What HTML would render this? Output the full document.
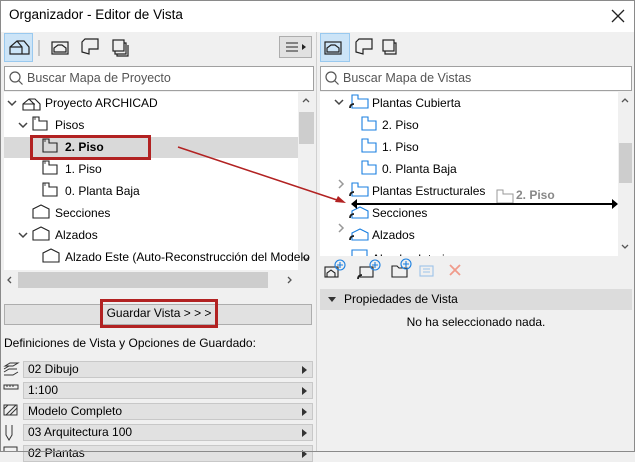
<html><head><style>
*{box-sizing:border-box}
body{margin:0;width:635px;height:452px;overflow:hidden;font-family:"Liberation Sans",sans-serif;font-size:12px;color:#000;background:#f0f0f0;position:relative}
.a{position:absolute}
.row{position:absolute;height:22px;line-height:22px;white-space:nowrap}
.srch{background:#fff;border:1px solid #a0a0a0;height:25px;line-height:23px;color:#555;padding-left:22px;font-size:12.5px}
.dd{position:absolute;left:23px;width:290px;height:17px;border:1px solid #c8c8c8;background:#e1e1e1;line-height:15px;padding-left:4px}
.dd:after{content:"";position:absolute;right:5px;top:4px;border-left:5px solid #333;border-top:4px solid transparent;border-bottom:4px solid transparent}
</style></head><body>
<div class="a" style="left:0;top:0;width:635px;height:452px;border:1px solid #8a8a8a;pointer-events:none;z-index:9"></div>
<div class="a" style="left:0;top:0;width:635px;height:32px;background:#fff"></div>
<div class="a" style="left:9px;top:7px;font-size:13.5px">Organizador - Editor de Vista</div>
<svg class="a" style="left:611px;top:9px" width="14" height="14" stroke="#222" stroke-width="1.3"><path d="M1 1l12 12M13 1L1 13"/></svg>
<div class="a" style="left:316px;top:32px;width:1px;height:420px;background:#d0d0d0"></div>

<div class="a" style="left:4px;top:33px;width:29px;height:29px;background:#cce4f7;border:1px solid #99c9ef"></div>
<svg class="a" style="left:0;top:32px" width="320" height="30" fill="none" stroke="#222" stroke-width="1.2">
<path d="M10 22V15l7-6h7l5 6v7zM17 9l5 6v7M10 15h12"/>
<line x1="39" y1="8" x2="39" y2="24" stroke="#aaa"/>
<rect x="52" y="10" width="16" height="12"/><path d="M54 20v-4l4-3h4l4 3v4z"/>
<path d="M82 20v-10l3-3h13v10h-9v5zM89 17h9"/>
<rect x="113" y="8" width="11" height="11"/><path d="M115 19v3h11v-11h-2M117 22v2h11v-11"/>
</svg>
<div class="a" style="left:279px;top:36px;width:33px;height:22px;background:#e1e1e1;border:1px solid #adadad"></div>
<svg class="a" style="left:284px;top:40px" width="28" height="14" stroke="#222"><path d="M2 3h12M2 7h12M2 11h12"/><path d="M18 4l4 3-4 3z" fill="#222" stroke="none"/></svg>

<div class="a srch" style="left:4px;top:66px;width:310px">Buscar Mapa de Proyecto</div>
<svg class="a" style="left:8px;top:70px" width="16" height="16" fill="none" stroke="#555" stroke-width="1.2"><circle cx="7" cy="7" r="5"/><path d="M10.5 10.5l4 4"/></svg>

<div class="a" style="left:4px;top:92px;width:294px;height:178px;background:#fff;overflow:hidden">
<div class="a" style="left:-4px;top:45px;width:298px;height:21px;background:#d9d9d9"></div>
</div>
<div class="a" style="left:298px;top:92px;width:16px;height:178px;background:#f0f0f0"></div>
<div class="a" style="left:299px;top:112px;width:15px;height:32px;background:#cdcdcd"></div>
<svg class="a" style="left:300px;top:96px" width="12" height="170" fill="none" stroke="#555" stroke-width="1.3"><path d="M3 6l3-3 3 3M3 161l3 3 3-3"/></svg>
<div class="a" style="left:4px;top:270px;width:310px;height:18px;background:#f0f0f0"></div>
<div class="a" style="left:18px;top:272px;width:250px;height:16px;background:#cdcdcd"></div>
<svg class="a" style="left:4px;top:272px" width="310" height="16" fill="none" stroke="#555" stroke-width="1.3"><path d="M7 5l-3 3 3 3M284 5l3 3-3 3"/></svg>

<svg class="a" style="left:0;top:92px" width="300" height="178" fill="none" stroke="#222" stroke-width="1.1">
<path d="M8 9l4 4 4-4M19 31l4 4 4-4M19 141l4 4 4-4" stroke="#444" stroke-width="1.5"/>
<path d="M23 18v-6l6-5h6l5 5v6zM29 7l5 5v6M23 12h12"/>
<path d="M33 38v-13h6v4h8v9z"/><path d="M35 25v3" stroke-width=".8"/>
<path d="M43 60v-13h6v4h8v9z"/><path d="M45 47v3" stroke-width=".8"/>
<path d="M43 82v-13h6v4h8v9z"/><path d="M45 69v3" stroke-width=".8"/>
<path d="M43 104v-13h6v4h8v9z"/><path d="M45 91v3" stroke-width=".8"/>
<path d="M33 126v-9l8-4 8 4v9z"/>
<path d="M33 148v-9l8-4 8 4v9z"/>
<path d="M43 170v-9l8-4 8 4v9z"/>
</svg>
<div class="row" style="left:45px;top:92px">Proyecto ARCHICAD</div>
<div class="row" style="left:55px;top:114px">Pisos</div>
<div class="row" style="left:65px;top:136px;font-weight:bold">2. Piso</div>
<div class="row" style="left:65px;top:158px">1. Piso</div>
<div class="row" style="left:65px;top:180px">0. Planta Baja</div>
<div class="row" style="left:55px;top:202px">Secciones</div>
<div class="row" style="left:55px;top:224px">Alzados</div>
<div class="row" style="left:65px;top:246px">Alzado Este (Auto-Reconstrucción del Modelo</div>
<div class="a" style="left:30px;top:135px;width:121px;height:25px;border:3px solid #b22222"></div>

<div class="a" style="left:4px;top:304px;width:308px;height:21px;background:#e1e1e1;border:1px solid #adadad"></div>
<div class="a" style="left:100px;top:299px;width:118px;height:29px;border:3px solid #b22222;text-align:center;line-height:23px">Guardar Vista &gt; &gt; &gt;</div>
<div class="a" style="left:4px;top:336px">Definiciones de Vista y Opciones de Guardado:</div>
<div class="dd" style="top:361px">02 Dibujo</div>
<div class="dd" style="top:382px">1:100</div>
<div class="dd" style="top:403px">Modelo Completo</div>
<div class="dd" style="top:424px">03 Arquitectura 100</div>
<div class="dd" style="top:445px">02 Plantas</div>
<svg class="a" style="left:0;top:360px" width="22" height="92" fill="none" stroke="#333" stroke-width="1">
<path d="M5 6l5-3h8l-5 3zM4 9l5-3M4 12l5-3h8M4 15h9l5-3"/>
<path d="M4 25h14v4H4zM7 25v2M10 25v2M13 25v2"/>
<rect x="4" y="45" width="13" height="10"/><path d="M4 49l4-4M6 55l10-10M10 55l7-7"/>
<path d="M6 65v10l3 5 3-5v-10"/>
<rect x="4" y="87" width="13" height="6"/>
</svg>

<div class="a" style="left:320px;top:33px;width:30px;height:29px;background:#cce4f7;border:1px solid #99c9ef"></div>
<svg class="a" style="left:317px;top:32px" width="80" height="30" fill="none" stroke="#222" stroke-width="1.2">
<rect x="8" y="10" width="16" height="12"/><path d="M10 20v-4l4-3h4l4 3v4z"/>
<path d="M39 20v-10l3-3h13v10h-9v5zM46 17h9"/>
<rect x="66" y="8" width="11" height="11"/><path d="M68 19v3h11v-11h-2"/>
</svg>
<div class="a srch" style="left:320px;top:66px;width:312px">Buscar Mapa de Vistas</div>
<svg class="a" style="left:324px;top:70px" width="16" height="16" fill="none" stroke="#555" stroke-width="1.2"><circle cx="7" cy="7" r="5"/><path d="M10.5 10.5l4 4"/></svg>

<div class="a" style="left:320px;top:92px;width:298px;height:164px;background:#fff"></div>
<div class="a" style="left:618px;top:92px;width:14px;height:164px;background:#f0f0f0"></div>
<div class="a" style="left:619px;top:143px;width:13px;height:40px;background:#cdcdcd"></div>
<svg class="a" style="left:619px;top:96px" width="12" height="160" fill="none" stroke="#555" stroke-width="1.3"><path d="M3 6l3-3 3 3M3 149l3 3 3-3"/></svg>
<svg class="a" style="left:317px;top:92px" width="300" height="164" fill="none" stroke="#1a7fe0" stroke-width="1.1">
<path d="M18 8l4 4 4-4" stroke="#444" stroke-width="1.5"/>
<path d="M22 96l4-4-4-4M22 140l4-4-4-4" stroke="#999" stroke-width="1.5"/>
<path d="M35 16v-13h6v4h10v9z"/>
<path d="M45 38v-13h6v4h8v9z"/><path d="M45 60v-13h6v4h8v9z"/><path d="M45 82v-13h6v4h8v9z"/>
<path d="M35 104v-13h6v4h10v9z"/>
<path d="M35 126v-7l8-4 8 4v7z"/>
<path d="M35 148v-7l8-4 8 4v7z"/>
<path d="M35 164v-6h15v6"/>
<path d="M33 16c0-3 2-4 4-4M33 104c0-3 2-4 4-4M33 126c0-3 2-4 4-4M33 148c0-3 2-4 4-4" stroke="#222" stroke-width="1.8"/>
</svg>
<div class="row" style="left:372px;top:92px">Plantas Cubierta</div>
<div class="row" style="left:382px;top:114px">2. Piso</div>
<div class="row" style="left:382px;top:136px">1. Piso</div>
<div class="row" style="left:382px;top:158px">0. Planta Baja</div>
<div class="row" style="left:372px;top:180px">Plantas Estructurales</div>
<div class="row" style="left:372px;top:202px">Secciones</div>
<div class="row" style="left:372px;top:224px">Alzados</div>
<div class="a" style="left:372px;top:248px;height:8px;overflow:hidden;line-height:22px">Alzados Interiores</div>
<svg class="a" style="left:495px;top:188px" width="20" height="16" fill="none" stroke="#999"><path d="M2 15v-13h6v4h10v9z"/></svg>
<div class="row" style="left:516px;top:184px;color:#888;font-weight:bold">2. Piso</div>

<svg class="a" style="left:0;top:0" width="635" height="452">
<line x1="178" y1="147" x2="340" y2="201" stroke="#b22222" stroke-width="1.5"/>
<path d="M346 203l-11-1 3-6z" fill="#b22222"/>
<line x1="352" y1="204" x2="617" y2="204" stroke="#000" stroke-width="2"/>
<path d="M351 204l6-5v10zM618 204l-6-5v10z" fill="#000"/>
</svg>

<svg class="a" style="left:320px;top:257px" width="150" height="28" fill="none" stroke="#222" stroke-width="1.1">
<rect x="5" y="10" width="13" height="10"/><path d="M7 20v-4l4-3 4 3v4"/><circle cx="20" cy="8" r="5" stroke="#1a7fe0"/><path d="M20 5v6M17 8h6" stroke="#1a7fe0"/>
<rect x="40" y="10" width="13" height="10"/><path d="M38 22c0-3 2-4 4-4" stroke-width="1.8"/><circle cx="55" cy="8" r="5" stroke="#1a7fe0"/><path d="M55 5v6M52 8h6" stroke="#1a7fe0"/>
<path d="M72 20v-11h5l2 2h8v9z"/><circle cx="86" cy="7" r="5" stroke="#1a7fe0"/><path d="M86 4v6M83 7h6" stroke="#1a7fe0"/>
<rect x="100" y="9" width="13" height="10" stroke="#9cc3ea"/><path d="M103 12h7M103 15h7" stroke="#9cc3ea"/>
<path d="M130 8l10 10M140 8l-10 10" stroke="#f09a8a" stroke-width="1.8"/>
</svg>
<div class="a" style="left:320px;top:289px;width:312px;height:21px;background:#dcdcdc;line-height:21px;padding-left:24px">Propiedades de Vista</div>
<div class="a" style="left:328px;top:297px;border-top:5px solid #333;border-left:4px solid transparent;border-right:4px solid transparent"></div>
<div class="a" style="left:320px;top:315px;width:312px;text-align:center">No ha seleccionado nada.</div>
</body></html>
